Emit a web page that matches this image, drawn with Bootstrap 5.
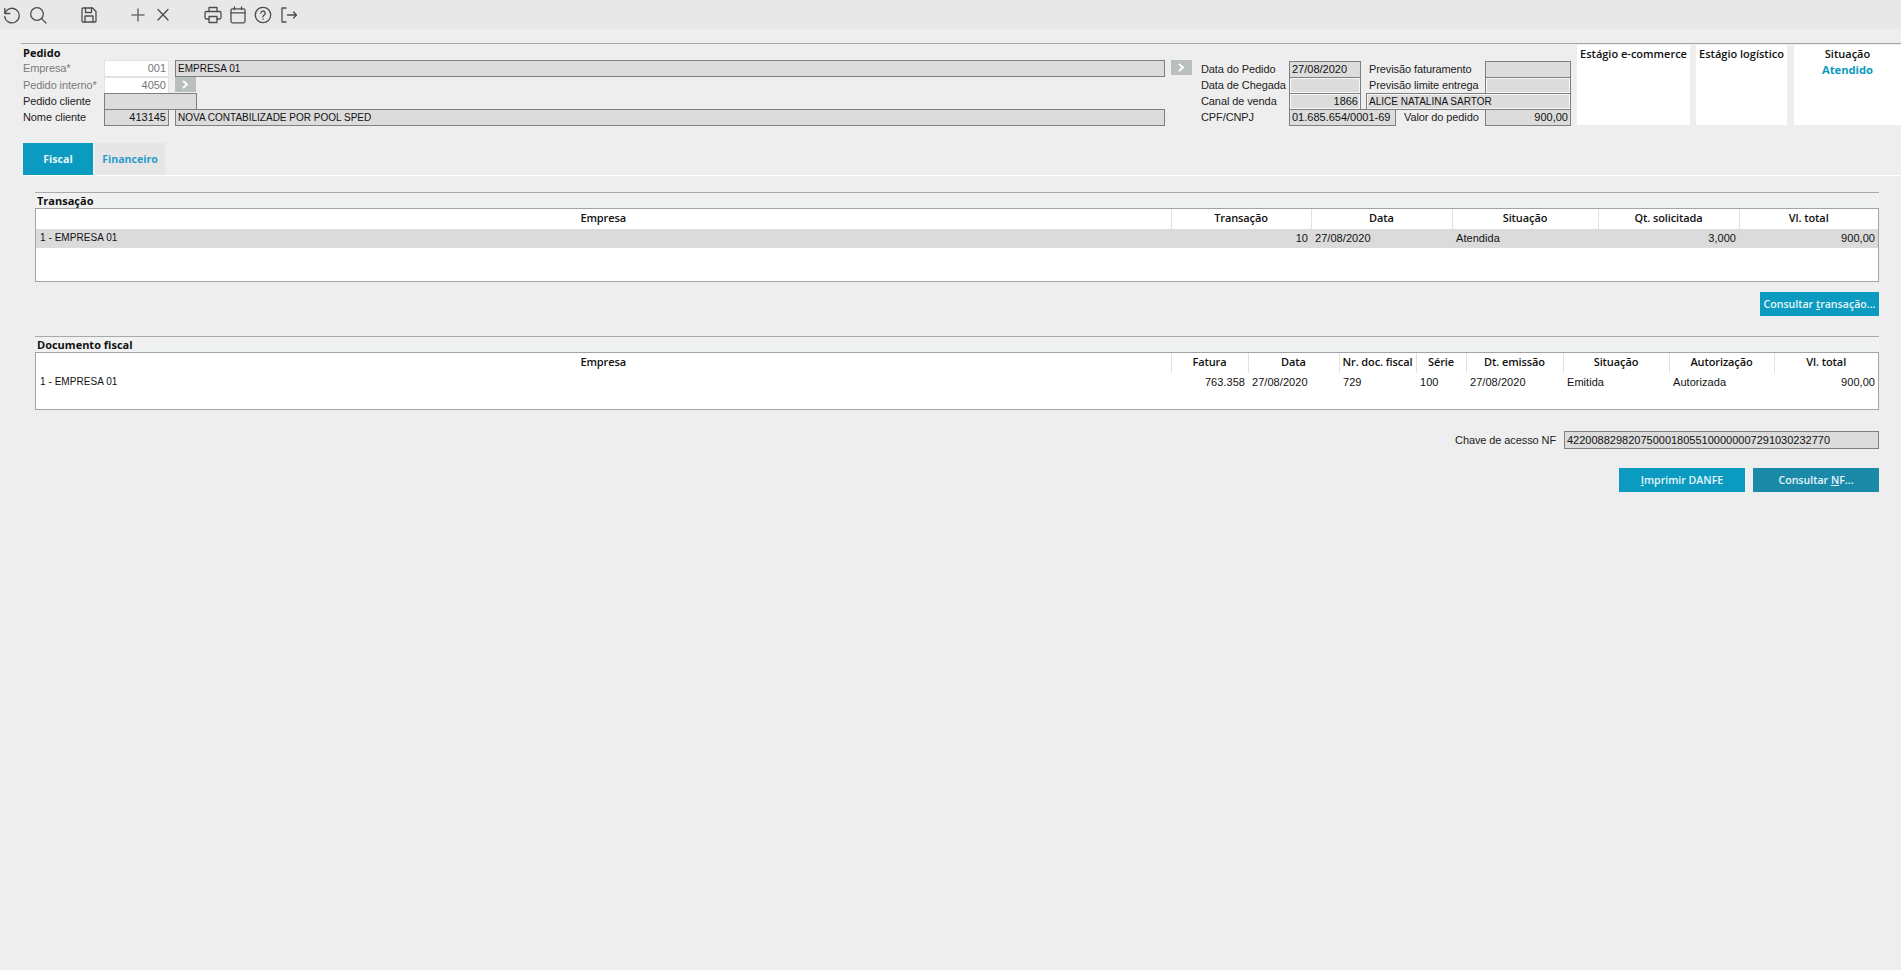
<!DOCTYPE html>
<html lang="pt-BR">
<head>
  <meta charset="UTF-8">
  <title>Pedido</title>
  <link href="https://cdn.jsdelivr.net/npm/bootstrap@5.3.0/dist/css/bootstrap.min.css" rel="stylesheet">
  <style>
    body {
      background: #eeeeee;
      color: #111;
      font-family: "Liberation Sans", Arial, sans-serif;
      font-size: 11px;
      line-height: 16px;
      height: 970px;
      overflow: hidden;
    }
    .tool-strip {
      height: 29px;
      background: #e8e8e8;
      padding-left: 3px;
    }
    .tool-btn {
      width: 18px;
      height: 18px;
      padding: 0;
      border: 0;
      background: none;
      display: block;
      flex: none;
    }
    .tool-btn svg { display: block; width: 18px; height: 18px; fill: none; stroke: #4d4d4d; stroke-width: 1.3; stroke-linecap: round; stroke-linejoin: round; }
    .tool-btn .plus-ico { stroke: #707070; stroke-width: 1.6; }
    .gap-7 { margin-left: 7px; }
    .gap-8 { margin-left: 8px; }
    .gap-31 { margin-left: 31px; }
    .gap-32 { margin-left: 32px; }
    .gap-33 { margin-left: 33px; }
    .head-wrap {
      margin: 14px 0 0 21px;
      border-top: 1px solid #a6a6a6;
      height: 82px;
    }
    .head-title, .box-title {
      font-family: "Open Sans", sans-serif;
      font-weight: 700;
      font-size: 11px;
      line-height: 16px;
    }
    .head-title { padding: 1px 0 0 2px; height: 16px; }
    .left-form { width: 1171px; }
    .form-line { height: 16px; }
    .line-first { height: 17px; }
    .lbl { color: #222; letter-spacing: -.1px; white-space: nowrap; }
    .lbl-muted { color: #7b7b7b; }
    .lbl-first { width: 83px; padding-left: 2px; flex: none; }
    .fld {
      height: 17px;
      background: #dcdcdc;
      border: 1px solid #7f7f7f;
      padding: 0 2px;
      line-height: 15px;
      flex: none;
      white-space: nowrap;
      overflow: hidden;
    }
    .fld-caps { font-size: 10px; }
    .fld-soft { box-shadow: inset 0 0 0 1px #f6f6f6; }
    .fld-white { background: #fff; border-color: #e2e2e2; color: #777; }
    .go-btn {
      width: 21px;
      height: 15px;
      background: #b9bebf;
      flex: none;
      border: 0;
      padding: 0;
      display: flex;
      align-items: center;
      justify-content: center;
    }
    .go-btn svg { width: 7px; height: 9px; fill: none; stroke: #fff; stroke-width: 2; }
    .go-near { margin-left: 6px; }
    .w-code { width: 65px; }
    .w-name { width: 990px; margin-left: 6px; }
    .w-cliente { width: 93px; }
    .mid-form { margin-left: 9px; padding-top: 17px; width: 370px; }
    .mid-lbl { width: 88px; flex: none; }
    .mid-lbl2 { width: 116px; flex: none; margin-left: 8px; }
    .w-date { width: 72px; }
    .w-prev { width: 86px; }
    .w-alice { width: 205px; margin-left: 5px; }
    .w-cpf { width: 107px; }
    .valor-lbl { width: 81px; flex: none; margin-left: 8px; }
    .state-card {
      background: #fff;
      height: 80px;
      margin-top: 1px;
      text-align: center;
      font-family: "Open Sans", sans-serif;
      font-weight: 600;
      font-size: 11px;
      line-height: 16px;
      padding-top: 1px;
      flex: none;
      white-space: nowrap;
    }
    .state-a { width: 113px; margin-left: 6px; }
    .state-b { width: 91px; margin-left: 6px; }
    .state-c { width: 107px; margin-left: 7px; }
    .state-val { color: #0b9bc0; font-weight: 700; font-size: 11.2px; line-height: 16px; }
    .tab-row {
      margin: 18px 0 0 21px;
      border-bottom: 1px solid #fff;
      padding-left: 2px;
      height: 33px;
    }
    .tab-item {
      width: 70px;
      height: 32px;
      line-height: 32px;
      text-align: center;
      font-family: "Open Sans", sans-serif;
      font-weight: 700;
      font-size: 10.6px;
      color: #2b9ccb;
      background: #e6e6e6;
      text-decoration: none;
      margin-right: 2px;
    }
    .tab-item.on { background: #0b9bc0; color: #e8f6fa; }
    .box-wrap { margin: 0 22px 0 35px; border-top: 1px solid #a9a9a9; }
    .box-second { margin-top: 20px; }
    .box-title { height: 15px; background: #f0f1f1; padding-left: 2px; line-height: 15px; }
    .grid-box { border: 1px solid #a3a3a3; background: #fff; overflow: hidden; }
    .grid-t { table-layout: fixed; width: 1842px; margin: 0; --bs-table-bg: transparent; }
    .grid-t th, .grid-t td {
      padding: 0 3px 2px 4px;
      font-size: 11px;
      white-space: nowrap;
      overflow: hidden;
      border: 0;
      color: #111;
      vertical-align: middle;
    }
    .grid-t th {
      font-family: "Open Sans", sans-serif;
      font-weight: 600;
      height: 20px;
      text-align: center;
      border-right: 1px solid #e2e2e2;
      padding: 0 0 3px;
      letter-spacing: -.1px;
    }
    .grid-t th:last-child { border-right: 0; }
    .grid-t td { height: 19px; letter-spacing: .05px; }
    .grid-t .cell-caps { font-size: 10px; }
    .grid-t .sel td { background: #dbdbdb; box-shadow: none; }
    .box-a { height: 74px; }
    .box-b { height: 58px; }
    .trans-act { margin-top: 10px; }
    .key-row { margin-top: 21px; }
    .btn-row { margin-top: 19px; }
    .act-btn {
      background: #0b9bc0;
      color: #e8f6fa;
      border: 0;
      border-radius: 0;
      height: 24px;
      padding: 0;
      font-family: "Open Sans", sans-serif;
      font-weight: 600;
      font-size: 10.6px;
      line-height: 24px;
    }
    .act-btn:hover { background: #0b9bc0; color: #fff; }
    .act-dark, .act-dark:hover { background: #1b8aa8; }
    .act-lg { width: 126px; }
    .act-md { width: 119px; }
    .key-fld { width: 315px; height: 18px; line-height: 16px; }
  </style>
</head>
<body>
  <!-- barra de ferramentas -->
  <div class="tool-strip d-flex align-items-center">
    <button class="tool-btn" title="Desfazer"><svg viewBox="0 0 18 18"><path d="M1.800 2.500v5h5"/><path d="M2 7.300A7.300 7.300 0 1 1 1.700 10.500"/></svg></button>
    <button class="tool-btn gap-8" title="Buscar"><svg viewBox="0 0 18 18"><circle cx="8" cy="8" r="6.300"/><path d="M12.600 12.600l4.400 4.400"/></svg></button>
    <button class="tool-btn gap-33" title="Salvar"><svg viewBox="0 0 18 18"><path d="M2 3a1 1 0 0 1 1-1h9.500L16 5.500V15a1 1 0 0 1-1 1H3a1 1 0 0 1-1-1z"/><path d="M5.500 2v4.500h6V2"/><path d="M5 16v-6h8v6"/></svg></button>
    <button class="tool-btn gap-31" title="Novo"><svg class="plus-ico" viewBox="0 0 18 18"><path d="M9 3v12M3 9h12"/></svg></button>
    <button class="tool-btn gap-7" title="Excluir"><svg viewBox="0 0 18 18"><path d="M4 3.500l10 10.500M14 3.500L4 14"/></svg></button>
    <button class="tool-btn gap-32" title="Imprimir"><svg viewBox="0 0 18 18"><path d="M5 5.500V1.500h8v4"/><path d="M5 13H2.500A1.500 1.500 0 0 1 1 11.500v-4.500A1.500 1.500 0 0 1 2.500 5.500h13A1.500 1.500 0 0 1 17 7v4.500a1.500 1.500 0 0 1-1.500 1.500H13"/><path d="M5 10.500h8v6H5z"/></svg></button>
    <button class="tool-btn gap-7" title="Agenda"><svg viewBox="0 0 18 18"><rect x="2" y="2.800" width="14" height="14" rx="1.500"/><path d="M2 6.800h14M5.500 1v2.500M12.500 1v2.500"/></svg></button>
    <button class="tool-btn gap-7" title="Ajuda"><svg viewBox="0 0 18 18"><circle cx="9" cy="9" r="7.700"/><path d="M6.800 7.200a2.200 2.200 0 1 1 3.300 1.900c-.8.500-1.100.9-1.100 1.700"/><path d="M9 12.900v.3"/></svg></button>
    <button class="tool-btn gap-8" title="Sair"><svg viewBox="0 0 18 18"><path d="M6 2H2v14h4"/><path d="M7.500 9H16.500M13.500 6l3 3-3 3"/></svg></button>
  </div>

  <!-- cabecalho do pedido -->
  <div class="head-wrap d-flex">
    <div class="left-form">
      <div class="head-title">Pedido</div>
      <div class="form-line line-first d-flex">
        <span class="lbl lbl-muted lbl-first">Empresa*</span>
        <div class="fld fld-white w-code text-end">001</div>
        <div class="fld fld-caps w-name">EMPRESA 01</div>
        <button class="go-btn ms-auto"><svg viewBox="0 0 7 9"><path d="M1 1l4 3.500-4 3.500"/></svg></button>
      </div>
      <div class="form-line d-flex">
        <span class="lbl lbl-muted lbl-first">Pedido interno*</span>
        <div class="fld fld-white w-code text-end">4050</div>
        <button class="go-btn go-near"><svg viewBox="0 0 7 9"><path d="M1 1l4 3.500-4 3.500"/></svg></button>
      </div>
      <div class="form-line d-flex">
        <span class="lbl lbl-first">Pedido cliente</span>
        <div class="fld w-cliente"></div>
      </div>
      <div class="form-line d-flex">
        <span class="lbl lbl-first">Nome cliente</span>
        <div class="fld w-code text-end">413145</div>
        <div class="fld fld-caps w-name">NOVA CONTABILIZADE POR POOL SPED</div>
      </div>
    </div>

    <div class="mid-form">
      <div class="form-line d-flex">
        <span class="lbl mid-lbl">Data do Pedido</span>
        <div class="fld w-date">27/08/2020</div>
        <span class="lbl mid-lbl2">Previsão faturamento</span>
        <div class="fld w-prev"></div>
      </div>
      <div class="form-line d-flex">
        <span class="lbl mid-lbl">Data de Chegada</span>
        <div class="fld fld-soft w-date"></div>
        <span class="lbl mid-lbl2">Previsão limite entrega</span>
        <div class="fld fld-soft w-prev"></div>
      </div>
      <div class="form-line d-flex">
        <span class="lbl mid-lbl">Canal de venda</span>
        <div class="fld fld-soft w-date text-end">1866</div>
        <div class="fld fld-soft fld-caps w-alice">ALICE NATALINA SARTOR</div>
      </div>
      <div class="form-line d-flex">
        <span class="lbl mid-lbl">CPF/CNPJ</span>
        <div class="fld w-cpf">01.685.654/0001-69</div>
        <span class="lbl valor-lbl">Valor do pedido</span>
        <div class="fld w-prev text-end">900,00</div>
      </div>
    </div>

    <div class="state-card state-a">Estágio e-commerce</div>
    <div class="state-card state-b">Estágio logístico</div>
    <div class="state-card state-c">Situação<div class="state-val">Atendido</div></div>
  </div>

  <!-- abas -->
  <div class="tab-row d-flex">
    <a class="tab-item on" href="#">Fiscal</a>
    <a class="tab-item" href="#">Financeiro</a>
  </div>

  <div class="box-wrap mt-3">
    <div class="box-title">Transação</div>
    <div class="grid-box box-a">
      <table class="table grid-t">
        <colgroup><col width="1135"><col width="140"><col width="141"><col width="146"><col width="141"><col width="139"></colgroup>
        <thead><tr><th>Empresa</th><th>Transação</th><th>Data</th><th>Situação</th><th>Qt. solicitada</th><th>Vl. total</th></tr></thead>
        <tbody><tr class="sel"><td class="cell-caps">1 - EMPRESA 01</td><td class="text-end">10</td><td>27/08/2020</td><td>Atendida</td><td class="text-end">3,000</td><td class="text-end">900,00</td></tr></tbody>
      </table>
    </div>
    <div class="d-flex justify-content-end trans-act"><button class="btn act-btn act-md">Consultar <u>t</u>ransação...</button></div>
  </div>

  <div class="box-wrap box-second">
    <div class="box-title">Documento fiscal</div>
    <div class="grid-box box-b">
      <table class="table grid-t">
        <colgroup><col width="1135"><col width="77"><col width="91"><col width="77"><col width="50"><col width="97"><col width="106"><col width="105"><col width="104"></colgroup>
        <thead><tr><th>Empresa</th><th>Fatura</th><th>Data</th><th>Nr. doc. fiscal</th><th>Série</th><th>Dt. emissão</th><th>Situação</th><th>Autorização</th><th>Vl. total</th></tr></thead>
        <tbody><tr><td class="cell-caps">1 - EMPRESA 01</td><td class="text-end">763.358</td><td>27/08/2020</td><td>729</td><td>100</td><td>27/08/2020</td><td>Emitida</td><td>Autorizada</td><td class="text-end">900,00</td></tr></tbody>
      </table>
    </div>
    <div class="d-flex justify-content-end align-items-center gap-2 key-row">
      <span class="lbl">Chave de acesso NF</span>
      <div class="fld key-fld">4220088298207500018055100000007291030232770</div>
    </div>
    <div class="d-flex justify-content-end gap-2 btn-row">
      <button class="btn act-btn act-lg"><u>I</u>mprimir DANFE</button>
      <button class="btn act-btn act-dark act-lg">Consultar <u>N</u>F...</button>
    </div>
  </div>
</body>
</html>
